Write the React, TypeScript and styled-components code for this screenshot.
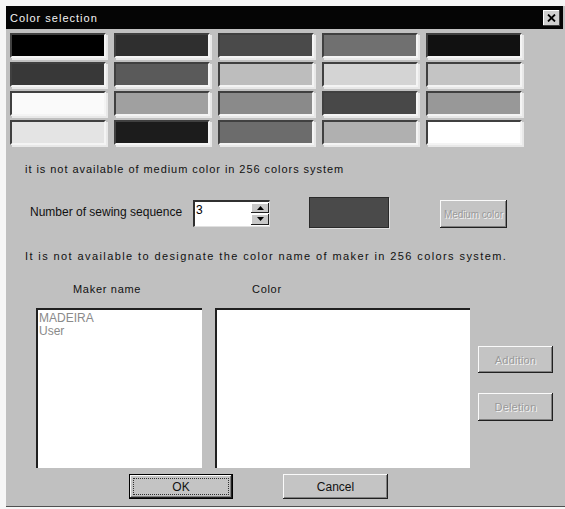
import React from "react";
import styled, { createGlobalStyle } from "styled-components";

const Global = createGlobalStyle`
  html, body { margin: 0; padding: 0; background: #f6f6f6; }
  body { font-family: "Liberation Sans", Arial, sans-serif; }
  * { box-sizing: border-box; }
`;

const Page = styled.div`
  width: 565px;
  height: 509px;
  padding: 6px 0 0 6px;
  overflow: hidden;
`;

const Window = styled.div`
  width: 559px;
  height: 501px;
  background: #c0c0c0;
  border-bottom: 1px solid #505050;
  display: flex;
  flex-direction: column;
`;

const TitleBar = styled.div`
  height: 23px;
  width: 557px;
  background: #050505;
  display: flex;
  align-items: center;
  justify-content: space-between;
  padding: 0 3px 0 4px;
`;

const TitleText = styled.span`
  color: #f4f4f4;
  font-size: 11px;
  letter-spacing: 1px;
`;

const CloseButton = styled.div`
  width: 17px;
  height: 16px;
  background: #d0d0d0;
  box-shadow: inset -1px -1px #404040, inset 1px 1px #fff;
  display: flex;
  align-items: center;
  justify-content: center;
`;

const Content = styled.div`
  padding: 4px 0 6px 4px;
  display: flex;
  flex-direction: column;
`;

const SwatchGrid = styled.div`
  display: grid;
  grid-template-columns: repeat(5, 96px);
  grid-auto-rows: 25px;
  column-gap: 8px;
  row-gap: 4px;
`;

const Swatch = styled.div<{ $c: string }>`
  background: ${(p) => p.$c};
  border-top: 2px solid #404040;
  border-left: 2px solid #404040;
  border-right: 2px solid #f4f4f4;
  border-bottom: 2px solid #f4f4f4;
  box-shadow: 2px 2px 0 #e8e8e8;
`;

const Note = styled.div<{ $top: number; $spacing: number }>`
  margin-top: ${(p) => p.$top}px;
  padding-left: 15px;
  font-size: 11px;
  line-height: 13px;
  letter-spacing: ${(p) => p.$spacing}px;
  white-space: nowrap;
  color: #111;
`;

const SequenceRow = styled.div`
  margin-top: 20px;
  height: 32px;
  padding-left: 20px;
  display: flex;
  align-items: center;
`;

const Label = styled.span`
  font-size: 12px;
  color: #111;
  width: 163px;
`;

const SpinBox = styled.div`
  width: 77px;
  height: 27px;
  background: #fff;
  border-top: 2px solid #303030;
  border-left: 2px solid #303030;
  border-right: 1px solid #e0e0e0;
  border-bottom: 1px solid #e0e0e0;
  display: flex;
  align-items: stretch;
  margin-top: 2px;
`;

const SpinValue = styled.span`
  flex: 1;
  font-size: 12px;
  padding: 1px 0 0 1px;
  color: #000;
`;

const SpinButtons = styled.div`
  width: 18px;
  display: flex;
  flex-direction: column;
  gap: 1px;
  padding: 1px 0;
`;

const SpinButton = styled.div`
  flex: 1;
  background: #c8c8c8;
  box-shadow: inset -1px -1px #202020, inset 1px 1px #fff;
  display: flex;
  align-items: center;
  justify-content: center;
`;

const ColorPreview = styled.div`
  width: 80px;
  height: 31px;
  margin-left: 39px;
  background: #4a4a4a;
  border: 1px solid #2a2a2a;
  box-shadow: 1px 1px 0 #e0e0e0;
`;

const Button = styled.div<{ $w: number; $h: number; $default?: boolean; $disabled?: boolean }>`
  width: ${(p) => p.$w}px;
  height: ${(p) => p.$h}px;
  background: #c4c4c4;
  border: ${(p) => (p.$default ? "1px solid #000" : "none")};
  box-shadow: inset -1px -1px #202020, inset 1px 1px #fafafa, inset -2px -2px #808080;
  display: flex;
  align-items: center;
  justify-content: center;
  white-space: nowrap;
  font-size: ${(p) => (p.$disabled ? 11 : 12)}px;
  letter-spacing: ${(p) => (p.$disabled ? "0.2px" : "0")};
  color: ${(p) => (p.$disabled ? "#9a9a9a" : "#111")};
  text-shadow: ${(p) => (p.$disabled ? "1px 1px 0 #f4f4f4" : "none")};
  position: relative;
`;

const FocusRing = styled.div`
  position: absolute;
  inset: 3px;
  border: 1px dotted #303030;
`;

const MediumButton = styled(Button)`
  margin-left: 51px;
  margin-top: 4px;
  font-size: 10px;
  letter-spacing: -0.1px;
`;

const ListsArea = styled.div`
  margin-top: 20px;
  padding-left: 26px;
  display: flex;
  align-items: flex-start;
`;

const Field = styled.div<{ $w: number; $gap: number }>`
  width: ${(p) => p.$w}px;
  margin-right: ${(p) => p.$gap}px;
  display: flex;
  flex-direction: column;
`;

const FieldLabel = styled.div`
  font-size: 11px;
  line-height: 13px;
  letter-spacing: 0.7px;
  padding-left: 37px;
  color: #111;
  margin-bottom: 12px;
`;

const ListBox = styled.div`
  height: 160px;
  background: #fff;
  border-top: 2px solid #202020;
  border-left: 2px solid #202020;
  padding: 2px 0 0 1px;
  display: flex;
  flex-direction: column;
`;

const ListItem = styled.div`
  font-size: 12px;
  line-height: 13px;
  color: #8a8a8a;
`;

const SideColumn = styled.div`
  padding-top: 63px;
  display: flex;
  flex-direction: column;
  gap: 20px;
`;

const Footer = styled.div`
  margin-top: 6px;
  padding-left: 119px;
  display: flex;
  gap: 50px;
  align-items: center;
`;

const swatches = [
  "#000000", "#2f2f2f", "#4a4a4a", "#707070", "#111111",
  "#383838", "#5a5a5a", "#bdbdbd", "#d4d4d4", "#c4c4c4",
  "#fafafa", "#a0a0a0", "#8a8a8a", "#484848", "#989898",
  "#e4e4e4", "#1c1c1c", "#6c6c6c", "#b0b0b0", "#ffffff",
];

const Arrow = ({ up }: { up?: boolean }) => (
  <svg width="7" height="4" viewBox="0 0 7 4">
    <polygon points={up ? "3.5,0 7,4 0,4" : "0,0 7,0 3.5,4"} fill="#000" />
  </svg>
);

export default function App() {
  return (
    <Page>
      <Global />
      <Window>
        <TitleBar>
          <TitleText>Color selection</TitleText>
          <CloseButton>
            <svg width="9" height="8" viewBox="0 0 9 8">
              <path d="M1 0.5 L8 7.5 M8 0.5 L1 7.5" stroke="#000" strokeWidth="1.8" />
            </svg>
          </CloseButton>
        </TitleBar>
        <Content>
          <SwatchGrid>
            {swatches.map((c, i) => (
              <Swatch key={i} $c={c} />
            ))}
          </SwatchGrid>
          <Note $top={18} $spacing={0.95}>it is not available of medium color in 256 colors system</Note>
          <SequenceRow>
            <Label>Number of sewing sequence</Label>
            <SpinBox>
              <SpinValue>3</SpinValue>
              <SpinButtons>
                <SpinButton><Arrow up /></SpinButton>
                <SpinButton><Arrow /></SpinButton>
              </SpinButtons>
            </SpinBox>
            <ColorPreview />
            <MediumButton $w={67} $h={28} $disabled>Medium color</MediumButton>
          </SequenceRow>
          <Note $top={22} $spacing={1.4}>It is not available to designate the color name of maker in 256 colors system.</Note>
          <ListsArea>
            <Field $w={166} $gap={13}>
              <FieldLabel>Maker name</FieldLabel>
              <ListBox>
                <ListItem>MADEIRA</ListItem>
                <ListItem>User</ListItem>
              </ListBox>
            </Field>
            <Field $w={255} $gap={8}>
              <FieldLabel>Color</FieldLabel>
              <ListBox />
            </Field>
            <SideColumn>
              <Button $w={75} $h={27} $disabled>Addition</Button>
              <Button $w={75} $h={28} $disabled>Deletion</Button>
            </SideColumn>
          </ListsArea>
          <Footer>
            <Button $w={104} $h={25} $default>
              <FocusRing />
              OK
            </Button>
            <Button $w={105} $h={25}>Cancel</Button>
          </Footer>
        </Content>
      </Window>
    </Page>
  );
}
